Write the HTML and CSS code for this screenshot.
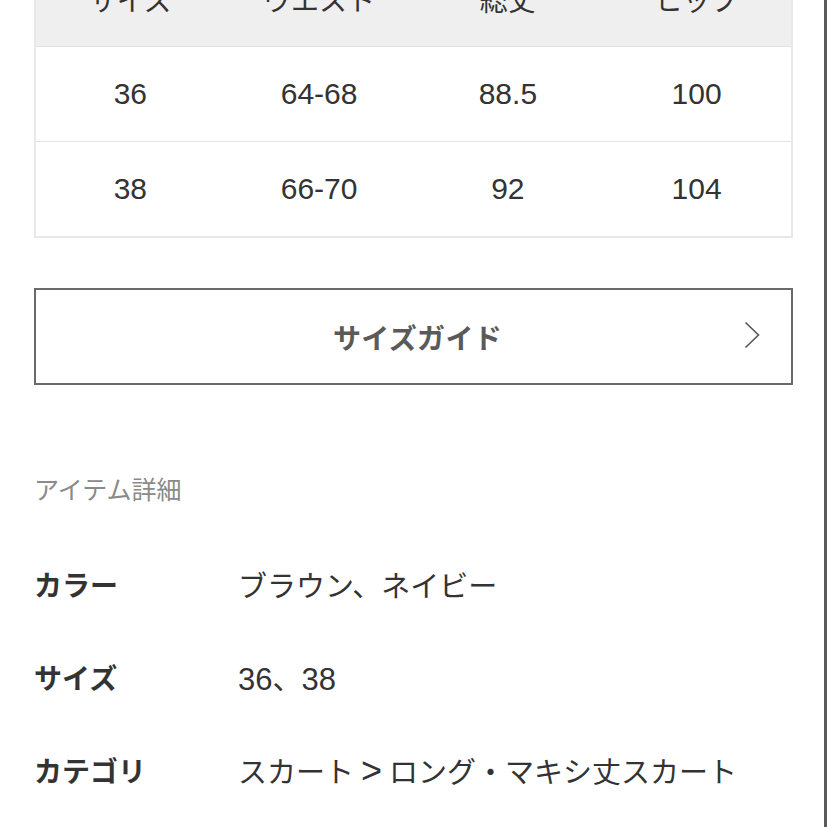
FILE: index.html
```html
<!DOCTYPE html>
<html lang="ja">
<head>
<meta charset="utf-8">
<title>サイズ</title>
<link rel="stylesheet" href="styles.css">
</head>
<body>
<div class="page">
  <div class="size-table">
    <div class="row head">
      <div class="cell">サイズ</div>
      <div class="cell">ウエスト</div>
      <div class="cell">総丈</div>
      <div class="cell">ヒップ</div>
    </div>
    <div class="row">
      <div class="cell">36</div>
      <div class="cell">64-68</div>
      <div class="cell">88.5</div>
      <div class="cell">100</div>
    </div>
    <div class="row last">
      <div class="cell">38</div>
      <div class="cell">66-70</div>
      <div class="cell">92</div>
      <div class="cell">104</div>
    </div>
  </div>

  <a class="guide-btn" href="#">
    <span class="guide-label">サイズガイド</span>
    <svg class="chevron" width="16" height="28" viewBox="0 0 16 28" aria-hidden="true">
      <polyline points="1.5,1.5 14.5,14 1.5,26.5" fill="none" stroke="#555" stroke-width="1.6"/>
    </svg>
  </a>

  <h2 class="section-title">アイテム詳細</h2>

  <dl class="details">
    <div class="detail-row">
      <dt>カラー</dt>
      <dd>ブラウン、ネイビー</dd>
    </div>
    <div class="detail-row">
      <dt>サイズ</dt>
      <dd><span class="num">36</span>、<span class="num">38</span></dd>
    </div>
    <div class="detail-row">
      <dt>カテゴリ</dt>
      <dd>スカート<span class="gt">&gt;</span>ロング・マキシ丈スカート</dd>
    </div>
  </dl>
</div>
</body>
</html>
```

FILE: styles.css
```css
html, body {
  margin: 0;
  padding: 0;
  background: #fff;
}

body {
  font-family: "Liberation Sans", "Noto Sans CJK JP", sans-serif;
  color: #333;
  overflow: hidden;
}

.page {
  width: 827px;
  height: 827px;
  box-sizing: border-box;
  border-right: 3px solid #5a5a5a;
  padding-left: 34px;
  padding-right: 31px;
  overflow: hidden;
}

.size-table {
  margin-top: -49px;
  width: 759px;
  box-sizing: border-box;
  border: 2px solid #e8e8e8;
  border-top: none;
}

.row {
  display: grid;
  grid-template-columns: repeat(4, 1fr);
  height: 94px;
  border-bottom: 1px solid #e3e3e3;
}

.row.head {
  height: 95px;
  background: #efefef;
  border-bottom: 1px solid #e3e3e3;
}

.row.last {
  border-bottom: none;
}

.cell {
  display: flex;
  align-items: center;
  justify-content: center;
  font-size: 30px;
  color: #333;
}

.head .cell {
  font-size: 28px;
}

.guide-btn {
  margin-top: 50px;
  width: 759px;
  height: 97px;
  box-sizing: border-box;
  border: 2px solid #6a6a6a;
  padding-left: 8px;
  display: flex;
  align-items: center;
  justify-content: center;
  position: relative;
  text-decoration: none;
}

.guide-label {
  font-family: "Noto Sans CJK JP", sans-serif;
  font-size: 28px;
  font-weight: 700;
  color: #5a5a5a;
  letter-spacing: 0.3px;
}

.chevron {
  position: absolute;
  right: 31px;
  top: 31px;
}

.section-title {
  margin: 86px 0 0;
  font-family: "Noto Sans CJK JP", sans-serif;
  font-size: 25px;
  line-height: 34px;
  font-weight: 400;
  color: #8a8a8a;
}

.details {
  margin: 32px 0 0;
}

.detail-row {
  display: flex;
  align-items: center;
  height: 93px;
}

.detail-row dt {
  width: 204px;
  font-family: "Noto Sans CJK JP", sans-serif;
  font-size: 28px;
  font-weight: 700;
  color: #333;
}

.detail-row dd {
  margin: 0;
  font-size: 29px;
  color: #333;
}

.num {
  font-size: 31px;
}

.gt {
  font-size: 36px;
  line-height: 1;
  margin: 0 7px;
}
```
